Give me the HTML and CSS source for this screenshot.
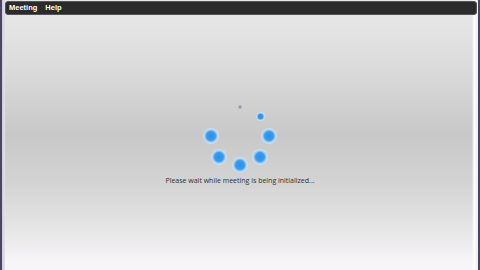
FILE: index.html
```html
<!DOCTYPE html>
<html>
<head lang="en">
    <meta charset="UTF-8">
    <title>Meeting</title>
    <link rel="stylesheet" href="styles.css">
</head>
<body>
    <div id="frame">
        <div id="menubar">
            <span class="menu">Meeting</span>
            <span class="menu">Help</span>
        </div>
        <div id="stage">
            <div id="spinner">
                <i class="dot tiny" style="left:35px;top:6px"></i>
                <i class="dot small" style="left:55px;top:15px"></i>
                <i class="dot" style="left:6px;top:35px"></i>
                <i class="dot" style="left:64px;top:35px"></i>
                <i class="dot" style="left:14px;top:56px"></i>
                <i class="dot" style="left:55px;top:56px"></i>
                <i class="dot" style="left:35px;top:64px"></i>
            </div>
            <p id="status">Please wait while meeting is being initialized...</p>
        </div>
    </div>
</body>
</html>
```

FILE: styles.css
```css
*{
    margin: 0;
    padding: 0;
}
html,body{
    width: 480px;
    height: 270px;
    overflow: hidden;
}
body{
    font-family: "Open Sans", "Liberation Sans", sans-serif;
    background: #4a4660;
}
#frame{
    width: 476px;
    height: 270px;
    margin-left: 2px;
    display: flex;
    flex-direction: column;
    background: linear-gradient(to right, #cfcbdc 0, #e4e2ec 3px, transparent 3px, transparent 470px, #ffffff 472px, #ecebf2 476px),
                linear-gradient(to bottom, #e8e8e8 0, #e2e2e2 40px, #d2d2d2 100px, #c8c8c8 135px, #d4d4d4 185px, #e6e6e6 230px, #f7f5f7 262px);
}
#menubar{
    margin: 1px 1px 0 3px;
    height: 14px;
    background: #2b2b2b;
    border: 1px solid #555;
    border-radius: 3px;
    display: flex;
    align-items: center;
    padding-left: 3px;
    gap: 8px;
    box-sizing: border-box;
}
.menu{
    color: #fff;
    font-family: "Liberation Sans", sans-serif;
    font-size: 7.5px;
    font-weight: bold;
    line-height: 12px;
}
#stage{
    flex: 1;
    display: flex;
    flex-direction: column;
    align-items: center;
    padding-top: 86px;
}
#spinner{
    position: relative;
    width: 70px;
    height: 73px;
}
.dot{
    position: absolute;
    width: 16px;
    height: 16px;
    margin: -8px 0 0 -8px;
    border-radius: 50%;
    background: radial-gradient(circle, #2f8fe2 0, #3b9cec 40%, #8cc3f2 50%, rgba(205,226,246,0.9) 66%, rgba(220,230,240,0) 100%);
}
.dot.small{
    width: 9px;
    height: 9px;
    margin: -4.5px 0 0 -4.5px;
}
.dot.tiny{
    width: 4px;
    height: 4px;
    margin: -2px 0 0 -2px;
    background: radial-gradient(circle, #7a8290 0, #a8adb5 50%, rgba(200,200,200,0) 100%);
}
#status{
    font-size: 7px;
    line-height: 10px;
    color: #303030;
    margin-top: 2px;
}
```
